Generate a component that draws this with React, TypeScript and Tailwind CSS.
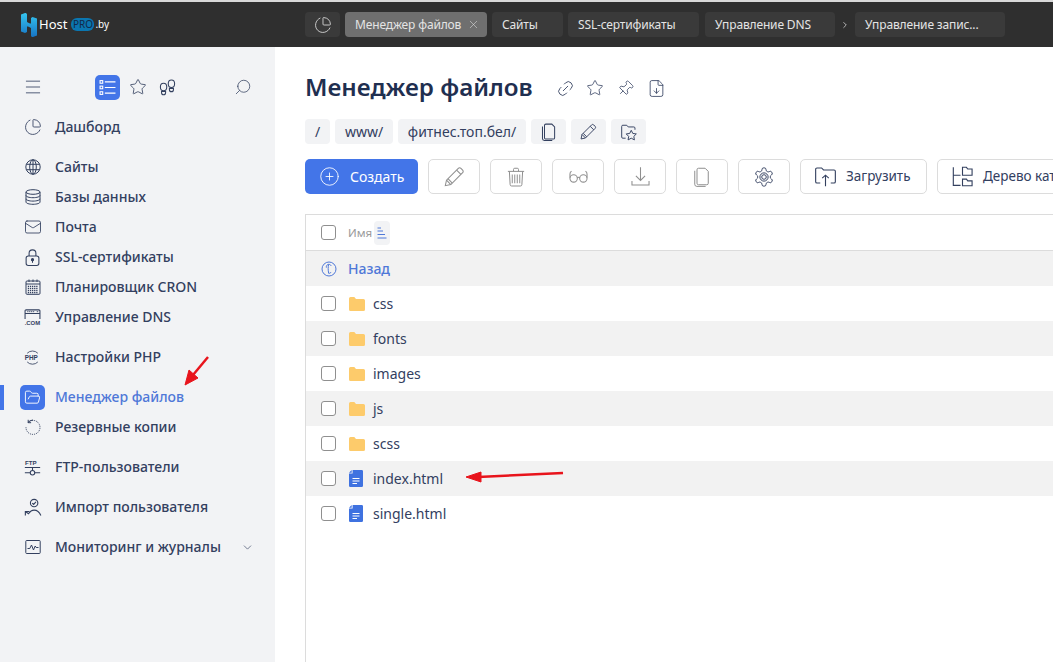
import { ChartPie, X, ChevronRight, ChevronDown, Menu, Star, Search, Mail, Link2, Pin, FileDown, CirclePlus, FolderOpen } from 'lucide-react';
import type { ReactNode } from 'react';

const font = "font-['Noto_Sans',sans-serif]";

function Ico({ size = 16, sw = 1, box = 16, children }: { size?: number; sw?: number; box?: number; children: ReactNode }) {
  return (
    <svg viewBox={`0 0 ${box} ${box}`} width={size} height={size} className="shrink-0" fill="none" stroke="currentColor" strokeWidth={sw}>
      {children}
    </svg>
  );
}

const GlobeIcon = () => (
  <Ico>
    <circle cx="8" cy="8" r="7.200" />
    <ellipse cx="8" cy="8" rx="3.300" ry="7.200" />
    <path d="M8 .8v14.400M1.300 5.300h13.400M1.300 10.700h13.400" />
  </Ico>
);
const DbIcon = () => (
  <Ico>
    <ellipse cx="8" cy="3" rx="7" ry="2.300" />
    <path d="M1 3v10c0 1.300 3.100 2.300 7 2.300s7-1 7-2.300V3M1 6.400c0 1.300 3.100 2.300 7 2.300s7-1 7-2.300M1 9.800c0 1.300 3.100 2.300 7 2.300s7-1 7-2.300" />
  </Ico>
);
const LockIcon = () => (
  <Ico size={17}>
    <rect x="2" y="6.500" width="12" height="9" rx="2" />
    <path d="M4.800 6.500V4a3.200 3.200 0 0 1 6.400 0v2.500" />
    <circle cx="8" cy="10" r="1" fill="currentColor" />
    <path d="M8 10.500v2.500" />
  </Ico>
);
const CalIcon = () => (
  <Ico>
    <rect x="1" y="2" width="14" height="13.300" rx="1" />
    <path d="M1 5h14M4 .5v2.500M8 .5v2.500M12 .5v2.500" />
    <path d="M2.800 7.300h10.400M2.800 9.500h10.400M2.800 11.700h10.400M2.800 13.600h10.400" strokeWidth="1.300" strokeDasharray="1.300 .8" />
  </Ico>
);
const ComIcon = () => (
  <Ico size={17}>
    <path d="M1 9.500V1.800A1 1 0 0 1 2 .8h12a1 1 0 0 1 1 1v7.700M1 4.200h14" />
    <path d="M3 2.500h7M12 2.500h2" strokeDasharray="1.200 .6" strokeWidth=".8" />
    <text x=".6" y="15.200" fontSize="5.600" fontWeight="700" fill="currentColor" stroke="none" fontFamily="Liberation Sans">.COM</text>
  </Ico>
);
const PhpIcon = () => (
  <Ico size={17}>
    <path d="M3 4a7 7 0 0 1 10 0M3 12.200a7 7 0 0 0 10 0" strokeWidth=".8" />
    <text x=".7" y="10.200" fontSize="6" fontWeight="700" fill="currentColor" stroke="none" fontFamily="Liberation Sans">PHP</text>
  </Ico>
);
const HistoryIcon = () => (
  <Ico>
    <path d="M3 3.500A7 7 0 1 1 1 8" strokeDasharray="1.100 1" />
    <path d="M3 3.500A7 7 0 0 1 8 1M3.200 .8v2.900h2.900" />
  </Ico>
);
const FtpIcon = () => (
  <Ico size={17}>
    <text x="1" y="5.800" fontSize="5.800" fontWeight="700" fill="currentColor" stroke="none" fontFamily="Liberation Sans">FTP</text>
    <path d="M.8 8h14.400M.8 13h5M10.200 13h5M8 8v3" />
    <circle cx="8" cy="13" r="2.100" />
  </Ico>
);
const UserImportIcon = () => (
  <Ico size={18}>
    <circle cx="9" cy="4.500" r="3.300" />
    <path d="M7.300 4.500l1.300 1.200 2-2.200M1.200 15.500v-3.500h3.500M1.200 12l2.800 2c1.300-2 3-3.200 5-3.200 2.700 0 4.700 1.800 6 4.700" />
  </Ico>
);
const ActivityIcon = () => (
  <Ico>
    <rect x=".8" y="1.500" width="14.400" height="13" rx=".8" />
    <path d="M2.500 9.500h2.300l1.700-3.500 2 5 1.700-4 1 1.500h2.300" />
  </Ico>
);
const TasksIcon = () => (
  <Ico size={17}>
    <rect x="1" y="1.500" width="2.500" height="2.500" />
    <rect x="1" y="6.700" width="2.500" height="2.500" />
    <rect x="1" y="12" width="2.500" height="2.500" />
    <path d="M5.500 2.700h10M5.500 8h10M5.500 13.300h10" />
  </Ico>
);
const StepsIcon = () => (
  <Ico size={17}>
    <ellipse cx="4.300" cy="7.500" rx="3" ry="3.500" />
    <path d="M2.400 11.800h3.800v1.200a1.900 1.900 0 0 1-3.800 0z" />
    <ellipse cx="11.700" cy="4.500" rx="3" ry="3.500" />
    <path d="M9.800 8.800h3.800V10a1.900 1.900 0 0 1-3.800 0z" />
  </Ico>
);
const CopyIcon = ({ size = 20, sw = 0.8 }: { size?: number; sw?: number }) => (
  <Ico size={size} sw={sw}>
    <path d="M4 13V2.200A1.200 1.200 0 0 1 5.200 1H10.500l2.500 2.500V13a1.200 1.200 0 0 1-1.200 1.200H5.200A1.200 1.200 0 0 1 4 13z" />
    <path d="M2.200 3v10.800A1.700 1.700 0 0 0 3.900 15.500h7" />
  </Ico>
);
const PencilIcon = ({ size = 21, sw = 0.8 }: { size?: number; sw?: number }) => (
  <Ico size={size} sw={sw}>
    <path d="M1 15l.9-4.200L10.900 1.800a1.400 1.400 0 0 1 2 0l1.300 1.300a1.400 1.400 0 0 1 0 2L5.200 14.100z" />
    <path d="M9.600 3.100l3.300 3.300M1.900 10.800l3.300 3.300M3 9.700l3.300 3.300" />
  </Ico>
);
const TrashIcon = () => (
  <Ico size={20} sw={0.8}>
    <path d="M1.500 3.500h13M6 3.500V2a1 1 0 0 1 1-1h2a1 1 0 0 1 1 1v1.500" />
    <path d="M2.700 3.500l.6 10.500a1.200 1.200 0 0 0 1.200 1.200h7a1.200 1.200 0 0 0 1.200-1.200l.6-10.500" />
    <path d="M5 6v7M7 6v7M9 6v7M11 6v7" />
  </Ico>
);
const GlassesIcon = () => (
  <Ico size={21} sw={0.8}>
    <circle cx="4.300" cy="9.500" r="2.800" />
    <circle cx="11.700" cy="9.500" r="2.800" />
    <path d="M7 9c.6-.6 1.400-.6 2 0M1.500 9V6c0-1 .4-1.600 1.200-2M14.500 9V6c0-1-.4-1.600-1.200-2" />
  </Ico>
);
const DownloadIcon = () => (
  <Ico size={21} sw={0.8}>
    <path d="M8 1v10M4.500 7.500L8 11l3.500-3.500M1.500 11.500v3h13v-3" />
  </Ico>
);
const GearIcon = () => (
  <svg viewBox="0 0 24 24" width="22" height="22" fill="none" stroke="currentColor" strokeWidth="1.050">
    <path d="M12.220 2h-.44a2 2 0 0 0-2 2v.18a2 2 0 0 1-1 1.730l-.43.25a2 2 0 0 1-2 0l-.15-.08a2 2 0 0 0-2.730.73l-.22.38a2 2 0 0 0 .73 2.730l.15.1a2 2 0 0 1 1 1.720v.51a2 2 0 0 1-1 1.740l-.15.09a2 2 0 0 0-.73 2.730l.22.38a2 2 0 0 0 2.730.73l.15-.08a2 2 0 0 1 2 0l.43.25a2 2 0 0 1 1 1.730V20a2 2 0 0 0 2 2h.44a2 2 0 0 0 2-2v-.18a2 2 0 0 1 1-1.730l.43-.25a2 2 0 0 1 2 0l.15.08a2 2 0 0 0 2.730-.73l.22-.39a2 2 0 0 0-.73-2.730l-.15-.08a2 2 0 0 1-1-1.740v-.5a2 2 0 0 1 1-1.740l.15-.09a2 2 0 0 0 .73-2.730l-.22-.38a2 2 0 0 0-2.730-.73l-.15.08a2 2 0 0 1-2 0l-.43-.25a2 2 0 0 1-1-1.730V4a2 2 0 0 0-2-2z" />
    <circle cx="12" cy="12" r="4.500" />
    <circle cx="12" cy="12" r="2.500" />
  </svg>
);
const UploadIcon = () => (
  <Ico size={21} sw={0.85}>
    <path d="M4 13H1.500a1 1 0 0 1-1-1V2.500a1 1 0 0 1 1-1H5l1.500 1.500h8a1 1 0 0 1 1 1V12a1 1 0 0 1-1 1H12" />
    <path d="M8 15.500V7M5.500 9.300L8 7l2.500 2.300" />
  </Ico>
);
const TreeIcon = () => (
  <Ico size={21} sw={0.85}>
    <path d="M1 1v13.800h5.500M1 7h5.500" />
    <path d="M8 1h3l1 1.300h3.300V7H8zM8 10h3l1 1.300h3.300V15H8z" />
  </Ico>
);
const FolderStarIcon = () => (
  <Ico size={18} sw={0.85}>
    <path d="M5 13.500H2.500a1 1 0 0 1-1-1V3a1 1 0 0 1 1-1H6l1.300 1.500h5a1 1 0 0 1 1 1V6" />
    <path d="M10 6.500l1.400 2.800 3.100.4-2.200 2.200.5 3.100-2.800-1.500-2.800 1.500.5-3.100-2.200-2.200 3.100-.4z" />
  </Ico>
);
const BackIcon = () => (
  <svg viewBox="0 0 24 24" className="h-[16px] w-[16px] shrink-0 text-[#4f78d8]" fill="none" stroke="currentColor" strokeWidth="1.500">
    <circle cx="12" cy="12" r="10.500" />
    <path d="M8 10c-.5-3 1.500-5 3.500-5s3.500 1 3.500 2.500M11.500 5c-1 4-1 8 0 13.500 1.500.3 3-.5 3.500-2" />
  </svg>
);
const SortIcon = () => (
  <svg viewBox="0 0 12 12" className="h-[12px] w-[12px] text-[#4f78d8]" fill="none" stroke="currentColor" strokeWidth="1">
    <path d="M1.500 1h3.500M1.500 4h5.500M1.500 7.500h7.500M1.500 11h9" />
  </svg>
);
const FolderIcon = () => (
  <svg viewBox="0 0 16 14" className="h-[14px] w-[16px]">
    <path d="M0 1.500A1.500 1.500 0 0 1 1.500 0h3.800L7 2h7.500A1.500 1.500 0 0 1 16 3.500v9a1.500 1.500 0 0 1-1.500 1.500h-13A1.500 1.500 0 0 1 0 12.500z" fill="#fdcb6b" />
  </svg>
);
const FileIcon = () => (
  <svg viewBox="0 0 14 17" className="h-[17px] w-[14px]">
    <path d="M3.600 0H12.700A1.300 1.300 0 0 1 14 1.300V15.700A1.300 1.300 0 0 1 12.700 17H1.300A1.300 1.300 0 0 1 0 15.700V3.600H3.600z" fill="#3f72e0" />
    <path d="M0 2.700L2.700 0V2.700z" fill="#3f72e0" />
    <path d="M3.500 8.500h7M3.500 11h7M3.500 13.500h4.500" stroke="#fff" strokeWidth="1" />
  </svg>
);
const Logo = () => (
  <svg viewBox="0 0 18 24" className="h-[24px] w-[18px]">
    <defs>
      <linearGradient id="lg" x1="0" y1="0" x2="0" y2="1">
        <stop offset="0" stopColor="#35c5ee" />
        <stop offset="1" stopColor="#1774c4" />
      </linearGradient>
    </defs>
    <path d="M1 1.500 5 0c1 0 2 .5 2 1.500V9c2 1.500 3 1.500 4 1.500V5l1.500-1L17 5.500V22.500L13 24c-1 0-2-.5-2-1.500V15c-2-1.500-3-1.500-4-1.500V19l-2 1-4-1.500z" fill="url(#lg)" />
  </svg>
);

function Tab({ children, className = '' }: { children: ReactNode; className?: string }) {
  return (
    <div className={`flex h-[25px] items-center whitespace-nowrap rounded-[4px] bg-[#3a3a3a] px-[10px] text-[12px] tracking-[-0.15px] text-[#e4e4e4] ${className}`}>
      {children}
    </div>
  );
}

function NavRow({ icon, label, active, right }: { icon: ReactNode; label: string; active?: boolean; right?: ReactNode }) {
  return (
    <div className={`relative flex h-[30px] items-center pl-[20px] ${active ? 'text-[#4f78d8]' : 'text-[#33405f]'}`}>
      {active && <div className="absolute left-0 top-[3px] h-[25px] w-[4px] bg-[#4375e8]" />}
      <div className={`flex h-[25px] w-[25px] items-center justify-center rounded-[5px] ${active ? 'bg-[#4375e8] text-white' : ''}`}>
        {icon}
      </div>
      <span className="ml-[10px] pb-[2px] text-[14px] font-medium">{label}</span>
      {right}
    </div>
  );
}

function Crumb({ children, className = '' }: { children: ReactNode; className?: string }) {
  return (
    <div className={`flex h-[25px] items-center justify-center rounded-[4px] bg-[#f2f3f5] text-[14px] text-[#33405f] ${className}`}>
      {children}
    </div>
  );
}

function ToolBtn({ children, dim }: { children: ReactNode; dim?: boolean }) {
  return (
    <button className={`flex h-[35px] w-[52px] shrink-0 items-center justify-center rounded-[5px] border border-[#dcdcdc] bg-white ${dim ? 'text-[#8f8f8f]' : 'text-[#33405f]'}`}>
      {children}
    </button>
  );
}

const files = [
  { name: 'css', dir: true },
  { name: 'fonts', dir: true },
  { name: 'images', dir: true },
  { name: 'js', dir: true },
  { name: 'scss', dir: true },
  { name: 'index.html', dir: false },
  { name: 'single.html', dir: false },
];

const Check = () => <div className="h-[15px] w-[15px] shrink-0 rounded-[3px] border border-[#8f8f8f] bg-white" />;

export default function App() {
  return (
    <div className={`relative flex h-[662px] w-[1053px] flex-col overflow-hidden bg-white ${font}`}>
      <div className="h-[2px] bg-[#d9d9d9]" />
      <header className="flex h-[45px] shrink-0 items-center bg-[#2f2f2f]">
        <div className="flex w-[305px] items-center pl-[20px]">
          <Logo />
          <span className="ml-[1px] text-[13px] text-white">Host</span>
          <span className="ml-[4px] w-[23px] rounded-[6px] bg-[#0b76b0] text-center text-[10px] leading-[13px] text-[#12294a]">PRO</span>
          <span className="ml-[1px] text-[10px] text-white">.by</span>
        </div>
        <div className="flex items-center gap-[5px]">
          <Tab className="w-[35px] justify-center !px-0"><ChartPie size={18} strokeWidth={1.1} /></Tab>
          <Tab className="w-[142px] justify-between !bg-[#6f6f6f] !pr-[7px]">
            Менеджер файлов <X size={13} strokeWidth={1} />
          </Tab>
          <Tab className="w-[71px]">Сайты</Tab>
          <Tab className="w-[131px]">SSL-сертификаты</Tab>
          <Tab className="ml-[1px] w-[130px]">Управление DNS</Tab>
          <div className="flex w-[10px] justify-center"><ChevronRight size={10} className="text-[#cccccc]" /></div>
          <Tab className="w-[150px]">Управление запис...</Tab>
        </div>
      </header>

      <div className="flex min-h-0 flex-1">
        <aside className="w-[275px] shrink-0 bg-[#f2f3f5] pt-[25px]">
          <div className="flex h-[30px] items-center text-[#33405f]">
            <Menu size={20} strokeWidth={1} className="ml-[23px]" />
            <div className="ml-[52px] flex h-[25px] w-[25px] items-center justify-center rounded-[5px] bg-[#4375e8] text-white">
              <TasksIcon />
            </div>
            <Star size={18} strokeWidth={1.1} className="ml-[9px]" />
            <div className="ml-[12px]"><StepsIcon /></div>
            <Search size={18} strokeWidth={1} className="ml-[58px] -scale-x-100" />
          </div>
          <div className="mt-[10px]">
            <NavRow icon={<ChartPie size={18} strokeWidth={1.15} />} label="Дашборд" />
          </div>
          <div className="mt-[10px]">
            <NavRow icon={<GlobeIcon />} label="Сайты" />
            <NavRow icon={<DbIcon />} label="Базы данных" />
            <NavRow icon={<Mail size={18} strokeWidth={1.15} />} label="Почта" />
            <NavRow icon={<LockIcon />} label="SSL-сертификаты" />
            <NavRow icon={<CalIcon />} label="Планировщик CRON" />
            <NavRow icon={<ComIcon />} label="Управление DNS" />
          </div>
          <div className="mt-[10px]">
            <NavRow icon={<PhpIcon />} label="Настройки PHP" />
          </div>
          <div className="mt-[10px]">
            <NavRow active icon={<FolderOpen size={17} strokeWidth={1.3} />} label="Менеджер файлов" />
            <NavRow icon={<HistoryIcon />} label="Резервные копии" />
          </div>
          <div className="mt-[10px]">
            <NavRow icon={<FtpIcon />} label="FTP-пользователи" />
          </div>
          <div className="mt-[10px]">
            <NavRow icon={<UserImportIcon />} label="Импорт пользователя" />
          </div>
          <div className="mt-[10px]">
            <NavRow
              icon={<ActivityIcon />}
              label="Мониторинг и журналы"
              right={<ChevronDown size={13} strokeWidth={1.2} className="ml-auto mr-[21px]" />}
            />
          </div>
        </aside>

        <main className="min-w-0 flex-1 overflow-hidden pl-[30px]">
          <div className="mt-[24px] flex h-[34px] items-center text-[#33405f]">
            <h1 className="pb-[2px] text-[24.200px] font-semibold leading-[32px] text-[#1f2f50]">Менеджер файлов</h1>
            <Link2 size={19} strokeWidth={1.05} className="ml-[23px] -rotate-45" />
            <Star size={18} strokeWidth={1.05} className="ml-[11px]" />
            <Pin size={17} strokeWidth={1.05} className="ml-[13px] rotate-45" />
            <FileDown size={19} strokeWidth={1.05} className="ml-[13px]" />
          </div>
          <div className="mt-[14px] flex gap-[5px]">
            <Crumb className="w-[25px]">/</Crumb>
            <Crumb className="w-[58px]">www/</Crumb>
            <Crumb className="w-[128px]">фитнес.топ.бел/</Crumb>
            <Crumb className="w-[35px]"><CopyIcon size={18} sw={0.9} /></Crumb>
            <Crumb className="w-[35px]"><PencilIcon size={17} sw={0.9} /></Crumb>
            <Crumb className="w-[35px]"><FolderStarIcon /></Crumb>
          </div>
          <div className="mt-[15px] flex gap-[10px]">
            <button className="flex h-[35px] w-[113px] shrink-0 items-center rounded-[5px] bg-[#4375e8] pl-[14px] text-[14px] text-white">
              <CirclePlus size={21} strokeWidth={1} />
              <span className="ml-[10px]">Создать</span>
            </button>
            <ToolBtn dim><PencilIcon /></ToolBtn>
            <ToolBtn dim><TrashIcon /></ToolBtn>
            <ToolBtn dim><GlassesIcon /></ToolBtn>
            <ToolBtn dim><DownloadIcon /></ToolBtn>
            <ToolBtn dim><CopyIcon /></ToolBtn>
            <ToolBtn><GearIcon /></ToolBtn>
            <button className="flex h-[35px] w-[127px] shrink-0 items-center rounded-[5px] border border-[#dcdcdc] bg-white pl-[14px] text-[13.500px] text-[#33405f]">
              <UploadIcon />
              <span className="ml-[10px]">Загрузить</span>
            </button>
            <button className="flex h-[35px] w-[190px] shrink-0 items-center whitespace-nowrap rounded-[5px] border border-[#dcdcdc] bg-white pl-[14px] text-[13.500px] text-[#33405f]">
              <TreeIcon />
              <span className="ml-[10px]">Дерево каталогов</span>
            </button>
          </div>

          <div className="mt-[20px] h-[500px] border-l border-t border-[#dcdcdc]">
            <div className="flex h-[36px] items-center border-b border-[#dcdcdc] pl-[15px]">
              <Check />
              <span className="ml-[12px] text-[11.500px] text-[#9a9a9a]">Имя</span>
              <div className="ml-[2px] flex h-[24px] w-[16px] items-center justify-center rounded-[4px] bg-[#f2f3f5]"><SortIcon /></div>
            </div>
            <div className="flex h-[35px] items-center bg-[#f2f2f2] pl-[15px] text-[14px] font-medium text-[#4f78d8]">
              <BackIcon />
              <span className="ml-[11px]">Назад</span>
            </div>
            {files.map((f, i) => (
              <div key={f.name} className={`flex h-[35px] items-center pl-[15px] text-[14px] text-[#33405f] ${i % 2 === 1 ? 'bg-[#f2f2f2]' : 'bg-white'}`}>
                <Check />
                <div className="ml-[13px] flex w-[22px] justify-start">
                  {f.dir ? <FolderIcon /> : <FileIcon />}
                </div>
                <span className="ml-[2px]">{f.name}</span>
              </div>
            ))}
          </div>
        </main>
      </div>

      <svg className="absolute left-0 top-0 h-[662px] w-[1053px]" viewBox="0 0 1053 662" fill="none">
        <path d="M208 357 L193 375" stroke="#e8141c" strokeWidth="2.500" />
        <path d="M185 385 L189 370 L198 378 Z" fill="#e8141c" stroke="#e8141c" />
        <path d="M563 473 L478 477" stroke="#e8141c" strokeWidth="2.500" />
        <path d="M466 477 L481 472 L481 482 Z" fill="#e8141c" stroke="#e8141c" />
      </svg>
    </div>
  );
}
